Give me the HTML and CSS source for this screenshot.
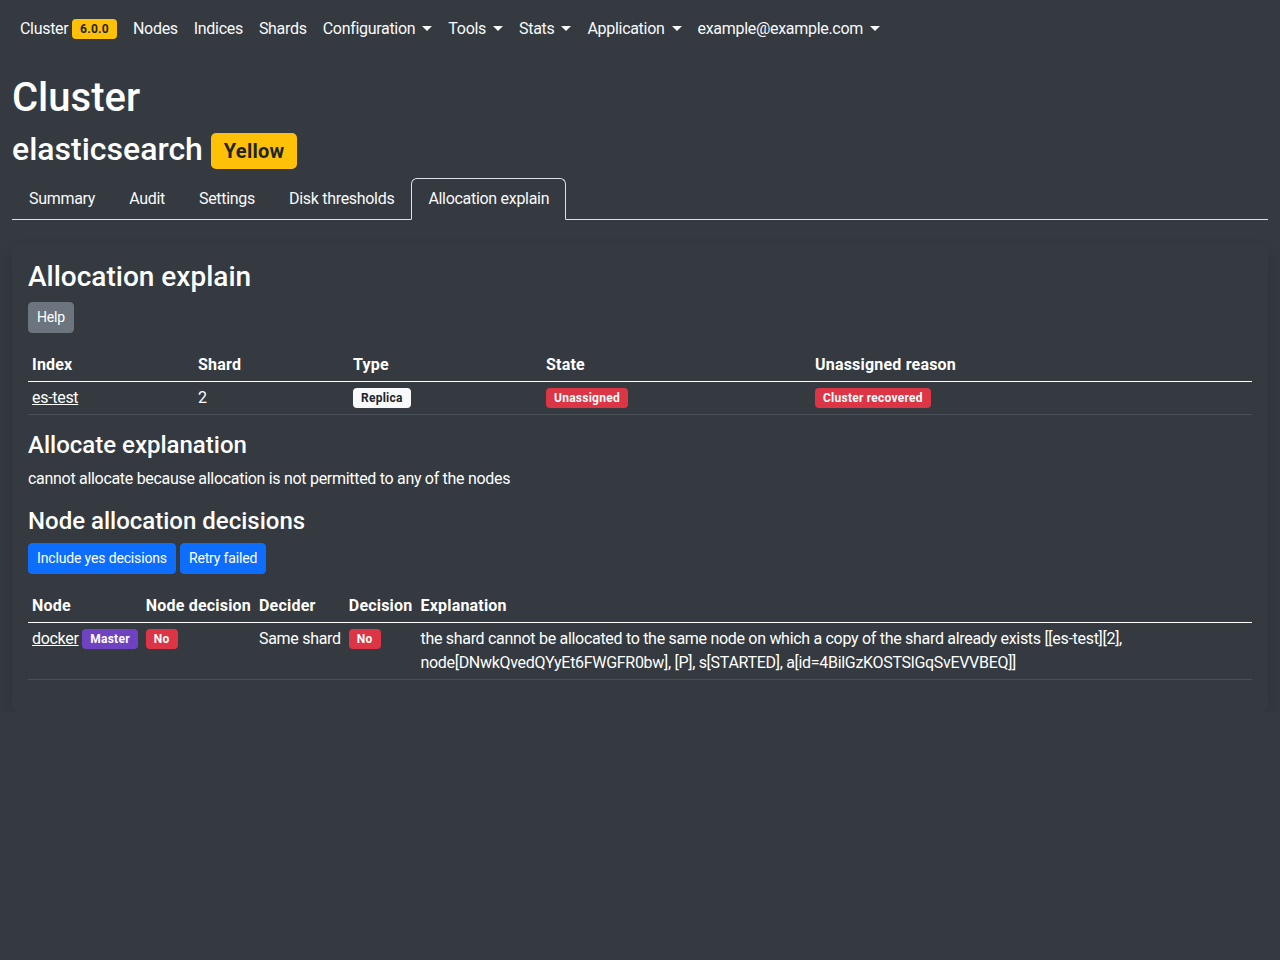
FILE: index.html
```html
<!DOCTYPE html>
<html lang="en">
<head>
<meta charset="utf-8">
<title>Cluster - Allocation explain</title>
<link rel="stylesheet" href="styles.css">
</head>
<body>
<nav class="navbar">
  <ul class="nav-list">
    <li><a class="nav-link" href="#">Cluster <span class="badge badge-warning">6.0.0</span></a></li>
    <li><a class="nav-link" href="#">Nodes</a></li>
    <li><a class="nav-link" href="#">Indices</a></li>
    <li><a class="nav-link" href="#">Shards</a></li>
    <li><a class="nav-link caret" href="#">Configuration</a></li>
    <li><a class="nav-link caret" href="#">Tools</a></li>
    <li><a class="nav-link caret" href="#">Stats</a></li>
    <li><a class="nav-link caret" href="#">Application</a></li>
    <li><a class="nav-link caret" href="#">example@example.com</a></li>
  </ul>
</nav>
<main class="container">
  <h1 class="page-title">Cluster</h1>
  <h2 class="cluster-name">elasticsearch <span class="badge badge-warning badge-lg">Yellow</span></h2>
  <ul class="tabs">
    <li><a class="tab" href="#">Summary</a></li>
    <li><a class="tab" href="#">Audit</a></li>
    <li><a class="tab" href="#">Settings</a></li>
    <li><a class="tab" href="#">Disk thresholds</a></li>
    <li><a class="tab active" href="#">Allocation explain</a></li>
  </ul>
  <section class="card">
    <h3 class="card-title">Allocation explain</h3>
    <button class="btn btn-secondary">Help</button>
    <table class="table table-fixed">
      <thead>
        <tr>
          <th class="c-index">Index</th>
          <th class="c-shard">Shard</th>
          <th class="c-type">Type</th>
          <th class="c-state">State</th>
          <th>Unassigned reason</th>
        </tr>
      </thead>
      <tbody>
        <tr>
          <td><a class="link" href="#">es-test</a></td>
          <td>2</td>
          <td><span class="badge badge-light">Replica</span></td>
          <td><span class="badge badge-danger">Unassigned</span></td>
          <td><span class="badge badge-danger">Cluster recovered</span></td>
        </tr>
      </tbody>
    </table>
    <h4 class="sub-title">Allocate explanation</h4>
    <p class="text">cannot allocate because allocation is not permitted to any of the nodes</p>
    <h4 class="sub-title">Node allocation decisions</h4>
    <div class="btn-row">
      <button class="btn btn-primary">Include yes decisions</button>
      <button class="btn btn-primary">Retry failed</button>
    </div>
    <table class="table">
      <thead>
        <tr>
          <th class="shrink">Node</th>
          <th class="shrink">Node decision</th>
          <th class="shrink">Decider</th>
          <th class="shrink">Decision</th>
          <th>Explanation</th>
        </tr>
      </thead>
      <tbody>
        <tr>
          <td class="shrink"><a class="link" href="#">docker</a> <span class="badge badge-purple">Master</span></td>
          <td class="shrink"><span class="badge badge-danger">No</span></td>
          <td class="shrink">Same shard</td>
          <td class="shrink"><span class="badge badge-danger">No</span></td>
          <td>the shard cannot be allocated to the same node on which a copy of the shard already exists [[es-test][2], node[DNwkQvedQYyEt6FWGFR0bw], [P], s[STARTED], a[id=4BilGzKOSTSlGqSvEVVBEQ]]</td>
        </tr>
      </tbody>
    </table>
  </section>
</main>
</body>
</html>
```
FILE: styles.css
```css
* { box-sizing: border-box; }
html, body { margin: 0; padding: 0; }
body {
  background: #343a40;
  color: #fff;
  font-family: Roboto, Inter, "Noto Sans", "Liberation Sans", sans-serif;
  font-size: 16px;
  line-height: 1.5;
  letter-spacing: -0.3px;
}
a { color: inherit; text-decoration: none; }

.navbar {
  padding: 9px 12px 7px;
}
.nav-list {
  list-style: none;
  margin: 0;
  padding: 0;
  display: flex;
}
.nav-link {
  display: block;
  padding: 8px;
  color: #f8f9fa;
}
.caret::after {
  content: "";
  display: inline-block;
  margin-left: 7px;
  vertical-align: 3px;
  border-top: 5px solid #f8f9fa;
  border-left: 5px solid transparent;
  border-right: 5px solid transparent;
}

.badge {
  display: inline-block;
  font-size: 12px;
  font-weight: 700;
  line-height: 1;
  padding: 4px 8px;
  border-radius: 4px;
  white-space: nowrap;
  vertical-align: 1px;
  letter-spacing: 0.25px;
}
.badge-warning { background: #ffc107; color: #212529; }
.badge-light { background: #f8f9fa; color: #212529; }
.badge-danger { background: #dc3545; color: #fff; }
.badge-purple { background: #6f42c1; color: #fff; }
.badge-lg {
  font-size: 20px;
  padding: 8px 13px;
  border-radius: 5px;
  vertical-align: 2px;
}

.container {
  padding: 18px 12px 0;
}
.page-title {
  margin: 0 0 8px;
  font-size: 40px;
  font-weight: 500;
  line-height: 1.2;
  letter-spacing: 0;
}
.cluster-name {
  margin: 0 0 9px;
  font-size: 32px;
  font-weight: 500;
  line-height: 1.2;
  letter-spacing: 0;
}

.tabs {
  list-style: none;
  margin: 0;
  padding: 0;
  display: flex;
  border-bottom: 1px solid #dee2e6;
}
.tab {
  display: block;
  padding: 8px 16px;
  margin-bottom: -1px;
  border: 1px solid transparent;
  border-radius: 6px 6px 0 0;
  color: #f8f9fa;
}
.tab.active {
  border-color: #dee2e6 #dee2e6 #343a40;
  background: #343a40;
}

.card {
  margin-top: 24px;
  padding: 16px;
  border-radius: 6px;
  background: #343a40;
  box-shadow: 0 8px 16px rgba(0, 0, 0, 0.15);
}
.card-title {
  margin: 0 0 8px;
  font-size: 28px;
  font-weight: 500;
  line-height: 1.2;
  letter-spacing: 0;
}
.sub-title {
  margin: 0 0 8px;
  font-size: 24px;
  font-weight: 500;
  line-height: 1.2;
  letter-spacing: 0;
}
.text { margin: 0 0 16px; }

.btn {
  font-family: inherit;
  font-size: 14px;
  line-height: 1.5;
  letter-spacing: -0.15px;
  padding: 4px 8px;
  border: 1px solid transparent;
  border-radius: 4px;
  color: #fff;
  cursor: pointer;
}
.btn-secondary { background: #6c757d; border-color: #6c757d; }
.btn-primary { background: #0d6efd; border-color: #0d6efd; }
.btn-row { display: flex; gap: 4px; margin-top: -1px; }

.table {
  width: 100%;
  margin: 16px 0;
  border-collapse: collapse;
  color: #fff;
}
.table th, .table td {
  padding: 4px;
  text-align: left;
  vertical-align: top;
}
.table th { font-weight: 700; letter-spacing: 0.2px; }
.table thead tr { border-bottom: 1px solid #fff; }
.table tbody tr { border-bottom: 1px solid #495057; }
.table-fixed { table-layout: fixed; }
.c-index { width: 166px; }
.c-shard { width: 155px; }
.c-type { width: 193px; }
.c-state { width: 269px; }
.shrink { width: 1%; white-space: nowrap; }
.link { text-decoration: underline; }
```
